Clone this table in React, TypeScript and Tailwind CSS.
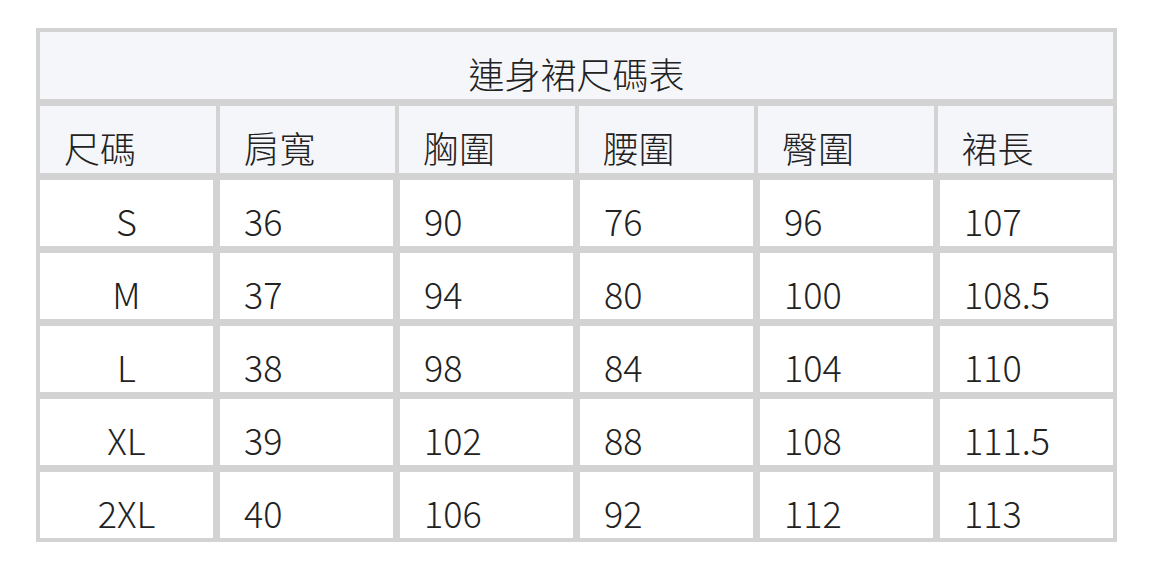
const HEAD = ["尺碼", "肩寬", "胸圍", "腰圍", "臀圍", "裙長"];

const ROWS = [
  ["S", "36", "90", "76", "96", "107"],
  ["M", "37", "94", "80", "100", "108.5"],
  ["L", "38", "98", "84", "104", "110"],
  ["XL", "39", "102", "88", "108", "111.5"],
  ["2XL", "40", "106", "92", "112", "113"],
];

export default function App() {
  return (
    <div className="min-h-screen bg-white pt-[28px] pl-[36px] font-['Noto_Sans_CJK_TC','Noto_Sans',sans-serif] font-light text-[36px] leading-[52px] text-[#222]">
      <div className="w-[1081px] bg-[#d3d3d3] p-[4px] flex flex-col gap-[7px]">
        <div className="h-[67px] bg-[#f5f6fa] flex items-end justify-center">連身裙尺碼表</div>
        <div className="grid grid-cols-6 gap-[4px] h-[67px]">
          {HEAD.map((h) => (
            <div key={h} className="bg-[#f5f6fa] flex items-end px-6">{h}</div>
          ))}
        </div>
        {ROWS.map((row) => (
          <div key={row[0]} className="grid grid-cols-6 gap-[7px] h-[66px]">
            {row.map((cell, i) => (
              <div
                key={i}
                className={i === 0 ? "bg-white flex items-end justify-center" : "bg-white flex items-end px-6"}
              >
                {cell}
              </div>
            ))}
          </div>
        ))}
      </div>
    </div>
  );
}
